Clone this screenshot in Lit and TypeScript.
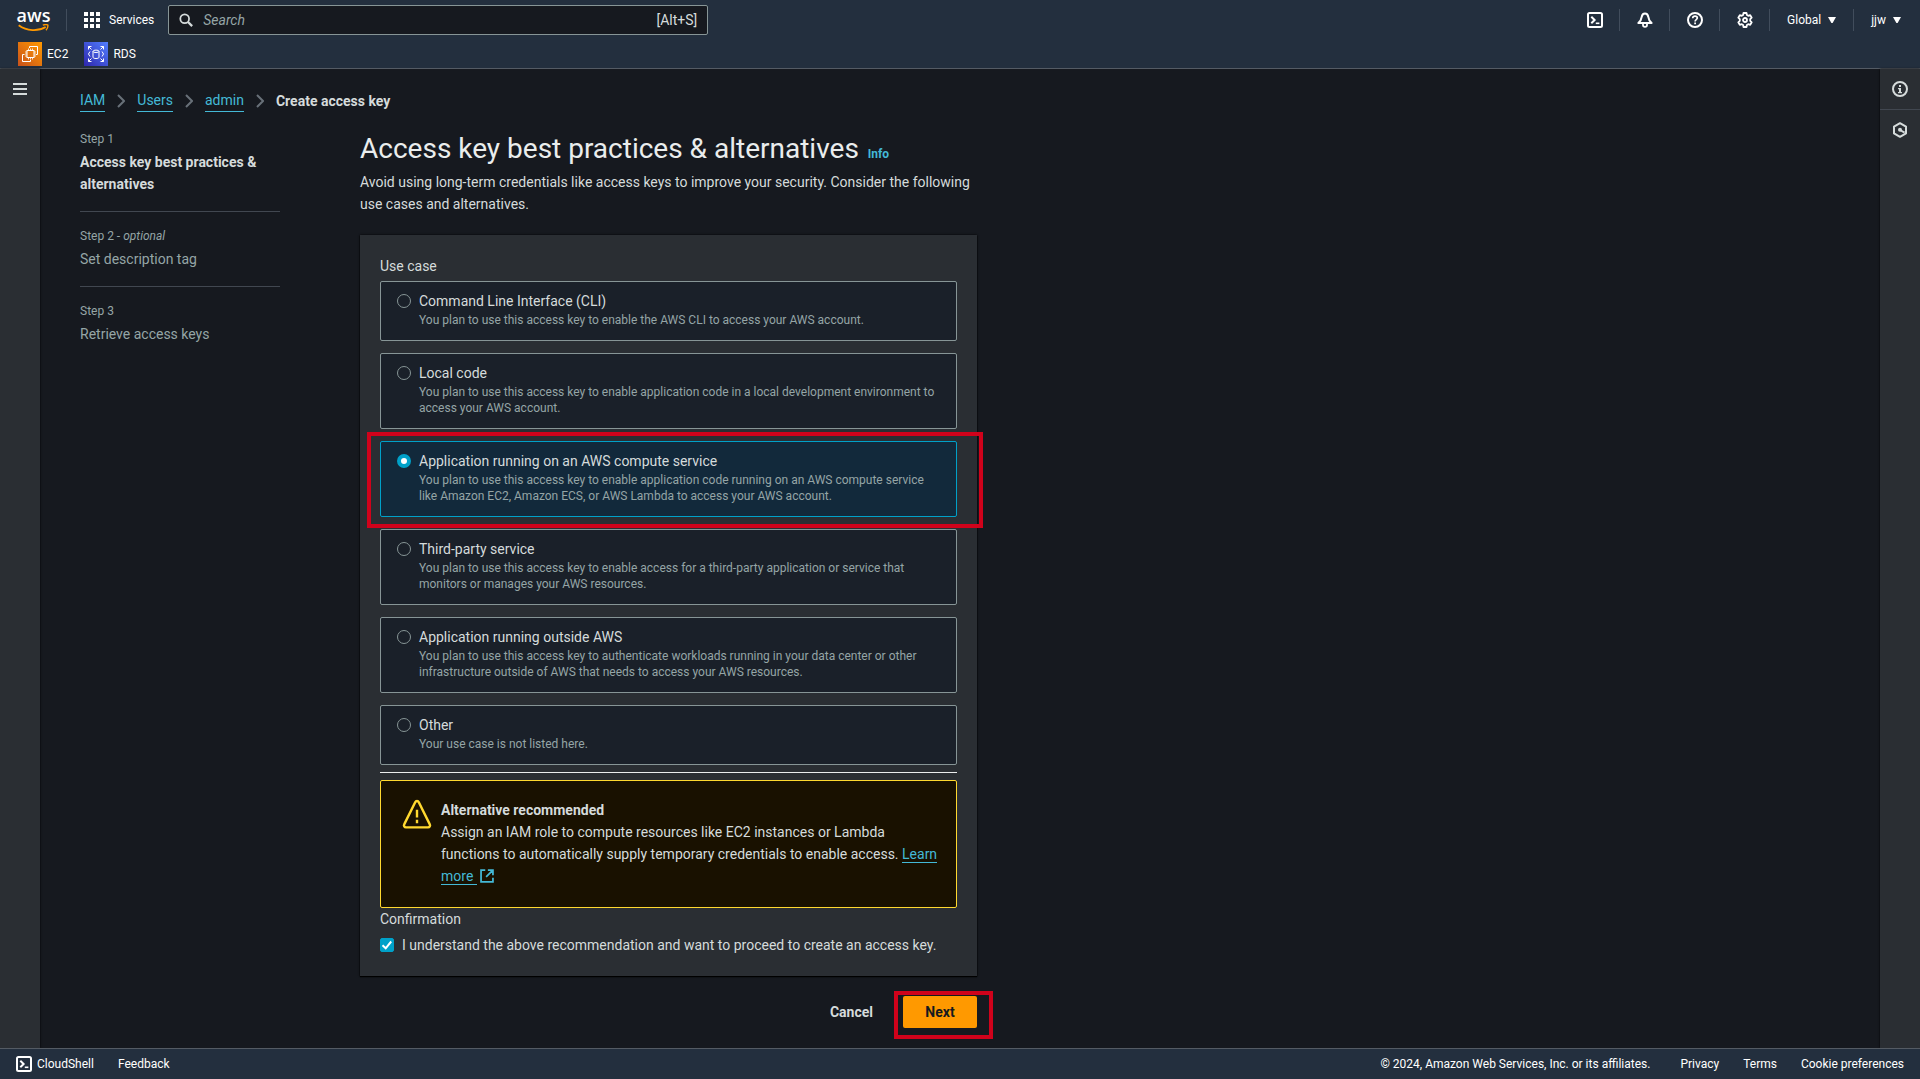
import { LitElement, html, css, svg, nothing } from 'lit';
import { customElement, state } from 'lit/decorators.js';
import { classMap } from 'lit/directives/class-map.js';

interface UseCase {
  id: string;
  title: string;
  description: string;
  highlighted?: boolean;
}

const USE_CASES: UseCase[] = [
  {
    id: 'cli',
    title: 'Command Line Interface (CLI)',
    description: 'You plan to use this access key to enable the AWS CLI to access your AWS account.',
  },
  {
    id: 'local',
    title: 'Local code',
    description:
      'You plan to use this access key to enable application code in a local development environment to access your AWS account.',
  },
  {
    id: 'compute',
    title: 'Application running on an AWS compute service',
    description:
      'You plan to use this access key to enable application code running on an AWS compute service like Amazon EC2, Amazon ECS, or AWS Lambda to access your AWS account.',
    highlighted: true,
  },
  {
    id: 'third-party',
    title: 'Third-party service',
    description:
      'You plan to use this access key to enable access for a third-party application or service that monitors or manages your AWS resources.',
  },
  {
    id: 'outside',
    title: 'Application running outside AWS',
    description:
      'You plan to use this access key to authenticate workloads running in your data center or other infrastructure outside of AWS that needs to access your AWS resources.',
  },
  { id: 'other', title: 'Other', description: 'Your use case is not listed here.' },
];

const icon = (size: number, content: unknown) => html`
  <svg width=${size} height=${size} viewBox="0 0 16 16" fill="none" stroke="currentColor"
    stroke-width="2" stroke-linejoin="round" aria-hidden="true">${content}</svg>`;

const icons = {
  grid: icon(16, svg`<path fill="currentColor" stroke="none" d="M0 0h4v4H0zM6 0h4v4H6zM12 0h4v4h-4zM0 6h4v4H0zM6 6h4v4H6zM12 6h4v4h-4zM0 12h4v4H0zM6 12h4v4H6zM12 12h4v4h-4z"/>`),
  search: icon(14, svg`<circle cx="6.5" cy="6.5" r="5"/><path stroke-width="2.6" d="M10.3 10.3L15 15"/>`),
  terminal: icon(16, svg`<rect x="1" y="1" width="14" height="14" rx="1.5"/><path d="M4.3 4.8L7.6 8l-3.3 3.2" stroke-linejoin="miter"/><path d="M8.8 11.3h3.6" stroke-width="1.6"/>`),
  bell: icon(16, svg`<path d="M8 1.500C6 1.500 5 2.900 4.700 4.900 4.400 7.400 3.300 9.300 1.400 11h13.200c-1.900-1.700-3-3.600-3.300-6.100C11 2.900 10 1.500 8 1.500z"/><path d="M6 11.500v1.600c0 1 .9 1.800 2 1.800s2-.8 2-1.800v-1.600" stroke-width="1.800"/>`),
  help: icon(16, svg`<circle cx="8" cy="8" r="7"/><path d="M5.700 6.200C5.800 4.800 6.700 4.100 8 4.100s2.300.8 2.300 2c0 1.500-2.200 1.500-2.200 3.300" stroke-width="1.700"/><path d="M7.200 10.500h1.800v1.700H7.200z" fill="currentColor" stroke="none"/>`),
  gear: icon(16, svg`<path d="M6.500 1h3l.4 2 1.300.8 2-.7 1.500 2.600L13.200 7.200v1.600l1.500 1.500-1.500 2.600-2-.7-1.300.8-.4 2h-3l-.4-2-1.300-.8-2 .7-1.500-2.600 1.500-1.500V7.200L1.300 5.700l1.500-2.600 2 .7L6.100 3z" stroke-width="1.800"/><circle cx="8" cy="8" r="2" stroke-width="1.800"/>`),
  menu: icon(14, svg`<path stroke-width="2.300" d="M0 2.200h16M0 8h16M0 13.800h16"/>`),
  info: icon(16, svg`<circle cx="8" cy="8" r="7"/><path d="M7 3.900h2v2H7zM6 7h3v4h1v1.300H6V11h1V8.300H6z" fill="currentColor" stroke="none"/>`),
  hexagon: icon(16, svg`<path d="M8 1.200l6 3.400v6.800l-6 3.400-6-3.400V4.600z"/><path d="M8 8l4.600 2.700" /><circle cx="8" cy="7.800" r="2" fill="currentColor" stroke="none"/>`),
  external: icon(14, svg`<path d="M6 1.200H1.200v13.600h13.600V10M9 1.200h5.800V7M14.500 1.500L7 9" stroke-linejoin="miter"/>`),
  warning: icon(32, svg`<path d="M7.1 1.600a1 1 0 0 1 1.800 0l5.500 11.100a1 1 0 0 1-.9 1.500h-11a1 1 0 0 1-.9-1.500z" stroke-width="1.200"/><path d="M8 5.400v3.900M8 10.400v1.700" stroke-width="1.200"/>`),
  chevron: html`<svg width="8" height="14" viewBox="0 0 8 14" fill="none" stroke="#687078" stroke-width="2" aria-hidden="true"><path d="M1 1l6 6-6 6"/></svg>`,
  caret: html`<svg width="8" height="6" viewBox="0 0 8 6" fill="currentColor" aria-hidden="true"><path d="M0 0h8L4.600 6H3.400z"/></svg>`,
  check: html`<svg class="tick" width="14" height="14" viewBox="0 0 14 14" fill="none" stroke="#fff" stroke-width="2" aria-hidden="true"><path d="M2.500 7.300l3.200 3L11.200 3.500"/></svg>`,
  smile: html`<svg class="smile" width="31" height="8" viewBox="0 0 31 8" fill="none" stroke="#f90" aria-hidden="true"><path d="M.7 1.200c8 6 19.500 6.400 27 1.800" stroke-width="1.900"/><path d="M24.800 1.200c2-.8 4-.8 5-.2.300 1.500-.3 3.600-1.800 5.200" stroke-width="1.400"/></svg>`,
  ec2: html`
    <svg width="24" height="24" viewBox="0 0 24 24" fill="none" stroke="#fff" aria-hidden="true">
      <defs><linearGradient id="ec2" x1="0" y1="1" x2="1" y2="0"><stop stop-color="#c8511b"/><stop offset="1" stop-color="#f90"/></linearGradient></defs>
      <path fill="url(#ec2)" stroke="none" d="M0 0h24v24H0z"/>
      <rect x="9" y="8.500" width="7" height="7"/>
      <path d="M10.500 6.500v2M12.500 6.500v2M14.500 6.500v2M10.500 15.500v2M12.500 15.500v2M14.500 15.500v2M7 10h2M7 12h2M7 14h2M16 10h2M16 12h2M16 14h2" stroke-width=".8"/>
      <path d="M11.500 6V4.500h8v8H18M6.500 12.500h-2v7h8V18"/>
    </svg>`,
  rds: html`
    <svg width="24" height="24" viewBox="0 0 24 24" fill="none" stroke="#fff" aria-hidden="true">
      <defs><linearGradient id="rds" x1="0" y1="1" x2="1" y2="0"><stop stop-color="#2e27ad"/><stop offset="1" stop-color="#527fff"/></linearGradient></defs>
      <path fill="url(#rds)" stroke="none" d="M0 0h24v24H0z"/>
      <path d="M4.500 7.500v-3h3M4.500 4.500l3 3M16.500 4.500h3v3M19.500 4.500l-3 3M4.500 16.500v3h3M4.500 19.500l3-3M16.500 19.500h3v-3M19.500 19.500l-3-3"/>
      <path d="M6 9.500L4.500 12 6 14.500M18 9.500l1.500 2.500-1.500 2.500"/>
      <ellipse cx="12" cy="9.300" rx="3" ry="1.200"/><path d="M9 9.300v6c0 1.600 6 1.600 6 0v-6"/>
    </svg>`,
};

@customElement('app-root')
export class AppRoot extends LitElement {
  @state() private selected = 'compute';
  @state() private confirmed = true;

  static styles = css`
    :host {
      display: flex;
      flex-direction: column;
      min-height: 100vh;
      background: #16191f;
      color: #d5dbdb;
      font: 400 14px/22px Roboto, 'Liberation Sans', sans-serif;
    }
    * { box-sizing: border-box; }
    svg { display: block; flex: none; }
    h1, p, ol, ul, fieldset { margin: 0; padding: 0; border: 0; }
    ol, ul { list-style: none; }
    a { color: inherit; text-decoration: none; }
    button { margin: 0; padding: 0; border: 0; background: none; color: inherit; font: inherit; cursor: pointer; }

    .header { background: #232f3e; border-bottom: 1px solid #545b64; color: #fff; font-size: 12px; line-height: 16px; }
    .top { display: flex; align-items: center; height: 40px; padding-left: 18px; }
    .logo { display: flex; flex-direction: column; align-items: center; width: 31px; font: 600 18px/14px 'Open Sans', sans-serif; }
    .smile { margin-top: 2px; }
    .divider { width: 1px; height: 22px; background: #414d5c; }
    .logo + .divider { margin: 0 17px; }
    .services { display: flex; align-items: center; gap: 9px; margin-right: 14px; }
    .search { display: flex; flex: 0 1 540px; align-items: center; gap: 10px; height: 30px; padding: 0 10px; border: 1px solid #879596; border-radius: 2px; background: #16191f; font-size: 14px; color: #d5dbdb; }
    .search input { flex: 1; min-width: 0; padding: 0; border: 0; outline: 0; background: none; color: inherit; font: inherit; }
    .search input::placeholder { color: #95a5a6; font-style: italic; opacity: 1; }
    .tools { display: flex; align-items: center; margin-left: auto; padding-right: 2px; }
    .tool { display: flex; align-items: center; justify-content: center; width: 49px; height: 40px; }
    .account { display: flex; align-items: center; gap: 7px; padding: 0 17px; }
    .favorites { display: flex; gap: 16px; height: 28px; padding: 2px 18px; }
    .favorites a { display: flex; align-items: center; gap: 5px; height: 24px; }

    .body { display: grid; flex: 1; grid-template-columns: 40px minmax(0, 1fr) 40px; }
    .rail { display: flex; flex-direction: column; background: #2a2e33; box-shadow: 0 0 2px #000; }
    .rail button { display: flex; align-items: center; justify-content: center; height: 40px; }
    .rail button + button { border-top: 1px solid #414750; }
    .content { padding: 20px 40px; }

    .crumbs { display: flex; align-items: center; gap: 12px; margin-bottom: 19px; }
    .crumbs li { display: flex; align-items: center; gap: 12px; }
    .current { font-weight: 700; }
    .link { border-bottom: 1px solid #44b9d6; color: #44b9d6; }
    .layout { display: grid; grid-template-columns: 200px minmax(0, 617px); gap: 80px; align-items: start; }

    .step { color: #95a5a6; }
    .step + .step { margin-top: 16px; padding-top: 16px; border-top: 1px solid #414750; }
    .number { margin-bottom: 4px; font-size: 12px; line-height: 16px; }
    .active .label { color: #d5dbdb; font-weight: 700; }

    .title { margin-bottom: 4px; color: #eaeded; font-size: 28px; font-weight: 400; line-height: 36px; }
    .info { margin-left: 2px; color: #44b9d6; font-size: 12px; font-weight: 700; line-height: 16px; }
    .card { margin: 20px 0; padding: 20px; background: #2a2e33; box-shadow: 0 1px 1px #000, 0 0 2px #000; }
    .tiles { display: grid; gap: 12px; margin-top: 4px; }
    .tile { position: relative; display: flex; gap: 8px; padding: 8px 16px 12px; border: 1px solid #879596; border-radius: 2px; background: #1a2029; }
    .tile.selected { border-color: #00a1c9; background: #12293b; }
    .tile.highlighted::after { content: ''; position: absolute; inset: -10px -27px -12px -14px; border: 4px solid #d0021b; pointer-events: none; }
    .radio, .checkbox { flex: none; appearance: none; width: 14px; height: 14px; margin: 4px 0; border: 1px solid #879596; }
    .radio { border-radius: 50%; }
    .radio:checked { border: 4px solid #00a1c9; background: #fff; }
    .text { min-width: 0; }
    .description { display: block; color: #95a5a6; font-size: 12px; line-height: 16px; }
    .rule { height: 1px; margin: 7px 0; border: 0; background: #eaeded; }
    .alert { display: flex; gap: 8px; padding: 18px 18px 20px 20px; border: 1px solid #ffd92f; border-radius: 2px; background: #191100; }
    .alert > svg { color: #ffd92f; }
    .alert strong { display: block; }
    .more { white-space: nowrap; }
    .more svg { display: inline-block; vertical-align: -2px; color: #44b9d6; }
    .confirm { display: flex; gap: 8px; margin-top: 4px; }
    .box { display: grid; }
    .checkbox, .tick { grid-area: 1 / 1; }
    .tick { margin: 4px 0; pointer-events: none; }
    .checkbox { border-radius: 2px; }
    .checkbox:checked { border-color: #00a1c9; background: #00a1c9; }

    .actions { display: flex; justify-content: flex-end; gap: 10px; }
    .button { position: relative; height: 32px; padding: 0 20px; border-radius: 2px; font-weight: 700; }
    .primary { min-width: 74px; background: #f90; color: #16191f; }
    .primary::after { content: ''; position: absolute; inset: -5px -16px -11px -9px; border: 4px solid #d0021b; pointer-events: none; }

    .footer { display: flex; align-items: center; gap: 24px; height: 31px; padding: 0 16px; border-top: 1px solid #545b64; background: #232f3e; color: #fff; font-size: 12px; line-height: 16px; }
    .shell { display: flex; align-items: center; gap: 5px; }
    .copyright { margin: 0 6px 0 auto; }
  `;

  private renderHeader() {
    return html`
      <header class="header">
        <div class="top">
          <a class="logo" href="#">aws${icons.smile}</a>
          <span class="divider"></span>
          <button class="services">${icons.grid}Services</button>
          <label class="search">
            ${icons.search}
            <input type="search" placeholder="Search" aria-label="Search" />
            <span>[Alt+S]</span>
          </label>
          <div class="tools">
            <button class="tool" aria-label="CloudShell">${icons.terminal}</button>
            <span class="divider"></span>
            <button class="tool" aria-label="Notifications">${icons.bell}</button>
            <span class="divider"></span>
            <button class="tool" aria-label="Support">${icons.help}</button>
            <span class="divider"></span>
            <button class="tool" aria-label="Settings">${icons.gear}</button>
            <span class="divider"></span>
            <button class="account">Global ${icons.caret}</button>
            <span class="divider"></span>
            <button class="account">jjw ${icons.caret}</button>
          </div>
        </div>
        <nav class="favorites" aria-label="Favorites">
          <a href="#">${icons.ec2}EC2</a>
          <a href="#">${icons.rds}RDS</a>
        </nav>
      </header>`;
  }

  private renderTile(item: UseCase) {
    const checked = item.id === this.selected;
    return html`
      <label class=${classMap({ tile: true, selected: checked, highlighted: !!item.highlighted })}>
        <input class="radio" type="radio" name="use-case" .checked=${checked}
          @change=${() => (this.selected = item.id)} />
        <span class="text">
          ${item.title}
          <span class="description">${item.description}</span>
        </span>
      </label>`;
  }

  private renderForm() {
    return html`
      <main>
        <h1 class="title">Access key best practices &amp; alternatives <a class="info" href="#">Info</a></h1>
        <p>
          Avoid using long-term credentials like access keys to improve your security. Consider the
          following use cases and alternatives.
        </p>
        <div class="card">
          <div id="use-case">Use case</div>
          <div class="tiles" role="radiogroup" aria-labelledby="use-case">
            ${USE_CASES.map((item) => this.renderTile(item))}
          </div>
          <hr class="rule" />
          <div class="alert">
            ${icons.warning}
            <div class="text">
              <strong>Alternative recommended</strong>
              Assign an IAM role to compute resources like EC2 instances or Lambda functions to
              automatically supply temporary credentials to enable access.
              <a href="#"><span class="link">Learn</span> <span class="more"><span class="link">more&nbsp;</span>${icons.external}</span></a>
            </div>
          </div>
          <div>Confirmation</div>
          <label class="confirm">
            <span class="box">
              <input class="checkbox" type="checkbox" .checked=${this.confirmed}
                @change=${(e: Event) => (this.confirmed = (e.target as HTMLInputElement).checked)} />
              ${this.confirmed ? icons.check : nothing}
            </span>
            <span>I understand the above recommendation and want to proceed to create an access key.</span>
          </label>
        </div>
        <div class="actions">
          <button class="button">Cancel</button>
          <button class="button primary">Next</button>
        </div>
      </main>`;
  }

  render() {
    return html`
      ${this.renderHeader()}
      <div class="body">
        <div class="rail"><button aria-label="Open navigation">${icons.menu}</button></div>
        <div class="content">
          <nav aria-label="Breadcrumbs">
            <ol class="crumbs">
              ${['IAM', 'Users', 'admin'].map(
                (name) => html`<li><a class="link" href="#">${name}</a>${icons.chevron}</li>`
              )}
              <li class="current">Create access key</li>
            </ol>
          </nav>
          <div class="layout">
            <ol>
              <li class="step active">
                <div class="number">Step 1</div>
                <div class="label">Access key best practices &amp; alternatives</div>
              </li>
              <li class="step">
                <div class="number">Step 2 - <i>optional</i></div>
                <div class="label">Set description tag</div>
              </li>
              <li class="step">
                <div class="number">Step 3</div>
                <div class="label">Retrieve access keys</div>
              </li>
            </ol>
            ${this.renderForm()}
          </div>
        </div>
        <div class="rail">
          <button aria-label="Info">${icons.info}</button>
          <button aria-label="Diagnostics">${icons.hexagon}</button>
        </div>
      </div>
      <footer class="footer">
        <button class="shell">${icons.terminal}CloudShell</button>
        <a href="#">Feedback</a>
        <span class="copyright">© 2024, Amazon Web Services, Inc. or its affiliates.</span>
        <a href="#">Privacy</a>
        <a href="#">Terms</a>
        <a href="#">Cookie preferences</a>
      </footer>`;
  }
}
